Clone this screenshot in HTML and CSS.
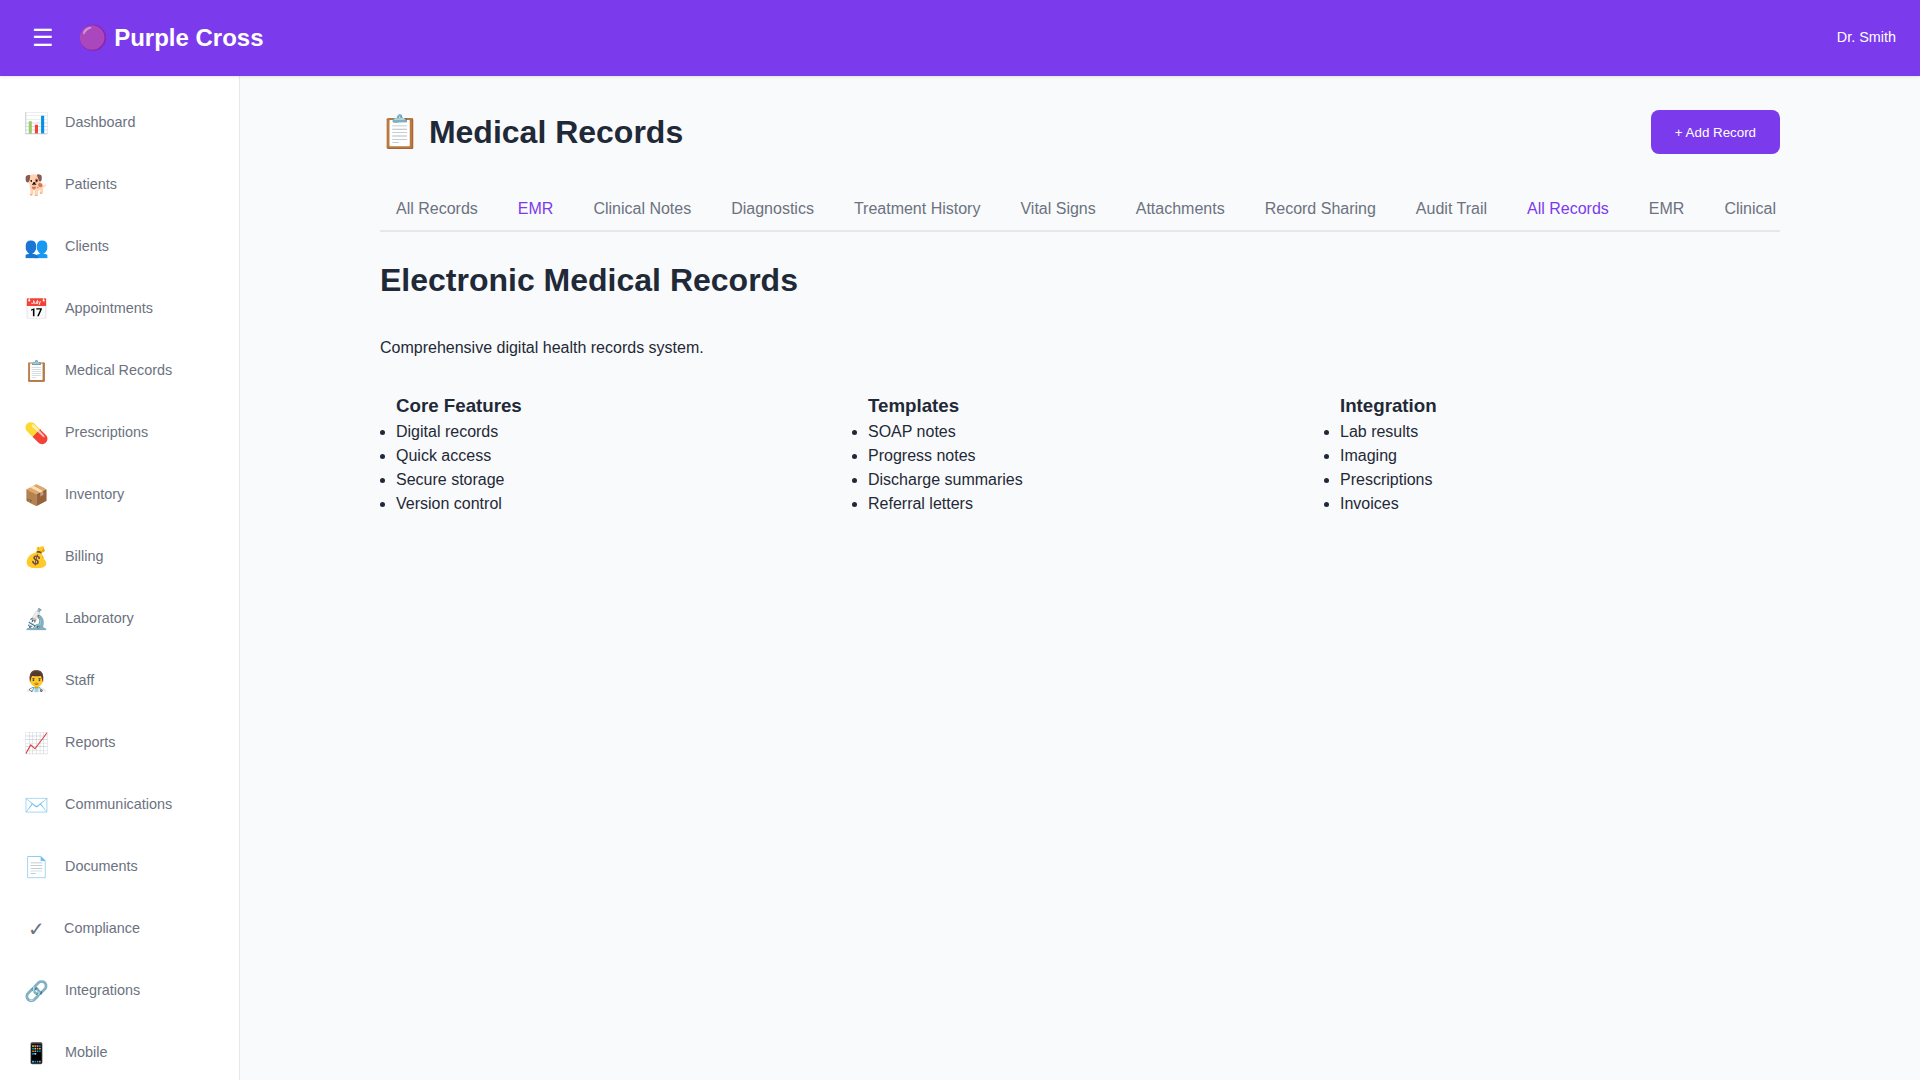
FILE: index.html
```html
<!DOCTYPE html>
<html lang="en">
<head>
<meta charset="utf-8">
<title>Purple Cross</title>
<link rel="stylesheet" href="styles.css">
</head>
<body>
<header class="topbar">
  <div class="brand">
    <button class="menu-btn" type="button">☰</button>
    <div class="logo">🟣 Purple Cross</div>
  </div>
  <div class="user">Dr. Smith</div>
</header>
<div class="shell">
  <nav class="sidebar">
    <a class="nav-item"><span class="nav-icon">📊</span><span>Dashboard</span></a>
    <a class="nav-item"><span class="nav-icon">🐕</span><span>Patients</span></a>
    <a class="nav-item"><span class="nav-icon">👥</span><span>Clients</span></a>
    <a class="nav-item"><span class="nav-icon">📅</span><span>Appointments</span></a>
    <a class="nav-item"><span class="nav-icon">📋</span><span>Medical Records</span></a>
    <a class="nav-item"><span class="nav-icon">💊</span><span>Prescriptions</span></a>
    <a class="nav-item"><span class="nav-icon">📦</span><span>Inventory</span></a>
    <a class="nav-item"><span class="nav-icon">💰</span><span>Billing</span></a>
    <a class="nav-item"><span class="nav-icon">🔬</span><span>Laboratory</span></a>
    <a class="nav-item"><span class="nav-icon">👨‍⚕️</span><span>Staff</span></a>
    <a class="nav-item"><span class="nav-icon">📈</span><span>Reports</span></a>
    <a class="nav-item"><span class="nav-icon">✉️</span><span>Communications</span></a>
    <a class="nav-item"><span class="nav-icon">📄</span><span>Documents</span></a>
    <a class="nav-item"><span class="nav-icon">✓</span><span>Compliance</span></a>
    <a class="nav-item"><span class="nav-icon">🔗</span><span>Integrations</span></a>
    <a class="nav-item"><span class="nav-icon">📱</span><span>Mobile</span></a>
  </nav>
  <main class="main">
    <div class="content">
      <div class="page-head">
        <h1 class="page-title">📋 Medical Records</h1>
        <button class="add-btn" type="button">+ Add Record</button>
      </div>
      <div class="tabs">
        <button class="tab" type="button">All Records</button>
        <button class="tab tab-active" type="button">EMR</button>
        <button class="tab" type="button">Clinical Notes</button>
        <button class="tab" type="button">Diagnostics</button>
        <button class="tab" type="button">Treatment History</button>
        <button class="tab" type="button">Vital Signs</button>
        <button class="tab" type="button">Attachments</button>
        <button class="tab" type="button">Record Sharing</button>
        <button class="tab" type="button">Audit Trail</button>
        <button class="tab tab-active" type="button">All Records</button>
        <button class="tab" type="button">EMR</button>
        <button class="tab" type="button">Clinical Notes</button>
      </div>
      <h2 class="section-title">Electronic Medical Records</h2>
      <p class="intro">Comprehensive digital health records system.</p>
      <div class="columns">
        <div class="column">
          <h3>Core Features</h3>
          <ul>
            <li>Digital records</li>
            <li>Quick access</li>
            <li>Secure storage</li>
            <li>Version control</li>
          </ul>
        </div>
        <div class="column">
          <h3>Templates</h3>
          <ul>
            <li>SOAP notes</li>
            <li>Progress notes</li>
            <li>Discharge summaries</li>
            <li>Referral letters</li>
          </ul>
        </div>
        <div class="column">
          <h3>Integration</h3>
          <ul>
            <li>Lab results</li>
            <li>Imaging</li>
            <li>Prescriptions</li>
            <li>Invoices</li>
          </ul>
        </div>
      </div>
    </div>
  </main>
</div>
</body>
</html>
```
FILE: styles.css
```css
* { box-sizing: border-box; }
html, body { height: 100%; }
body {
  margin: 0;
  height: 1080px;
  overflow: hidden;
  font-family: "Liberation Sans", Arial, sans-serif;
  font-size: 16px;
  line-height: 1.5;
  color: #1f2937;
  background: #f9fafb;
}
.topbar {
  position: relative;
  z-index: 2;
  height: 76px;
  padding: 0 24px;
  display: flex;
  align-items: center;
  justify-content: space-between;
  background: #7c3aed;
  color: #fff;
  box-shadow: 0 1px 3px rgba(0,0,0,.1);
}
.brand { display: flex; align-items: center; gap: 15.5px; }
.menu-btn {
  padding: 8px;
  border: 0;
  background: none;
  color: #fff;
  font-family: inherit;
  font-size: 24px;
  line-height: 1.5;
}
.logo { font-size: 24px; font-weight: 700; line-height: 36px; }
.user { font-size: 14.4px; }
.shell { display: flex; height: 1004px; }
.sidebar {
  width: 240px;
  flex: none;
  padding-top: 16px;
  overflow: hidden;
  background: #fff;
  border-right: 1px solid #e5e7eb;
}
.nav-item {
  display: flex;
  align-items: center;
  gap: 16px;
  height: 62px;
  padding: 12px 24px;
  color: #6b7280;
  font-size: 14.4px;
}
.nav-icon { min-width: 24px; font-size: 20px; line-height: 30px; text-align: center; }
.main { flex: 1; min-width: 0; padding: 32px; }
.content { max-width: 1400px; margin: 0 auto; }
.page-head {
  display: flex;
  align-items: center;
  justify-content: space-between;
  margin-bottom: 32px;
}
.page-title { margin: 0; font-size: 32px; font-weight: 700; line-height: 48px; }
.add-btn {
  height: 44px;
  padding: 0 24px;
  border: 0;
  border-radius: 8px;
  background: #7c3aed;
  color: #fff;
  font-family: inherit;
  font-size: 13.33px;
}
.tabs {
  display: flex;
  gap: 8px;
  margin-bottom: 24px;
  overflow: hidden;
  border-bottom: 2px solid #e5e7eb;
}
.tab {
  flex: none;
  padding: 12px 16px;
  border: 0;
  background: none;
  color: #6b7280;
  font-family: inherit;
  font-size: 16px;
}
.tab-active { color: #7c3aed; }
.section-title { margin: 0 0 32px; font-size: 32px; font-weight: 700; line-height: 48px; }
.intro { margin: 0 0 32px; color: #1f2937; }
.columns {
  display: grid;
  grid-template-columns: repeat(3, 1fr);
  gap: 16px;
}
.column h3 { margin: 0; padding-left: 16px; font-size: 18.72px; font-weight: 700; line-height: 28px; }
.column ul { margin: 0; padding-left: 16px; }
```
